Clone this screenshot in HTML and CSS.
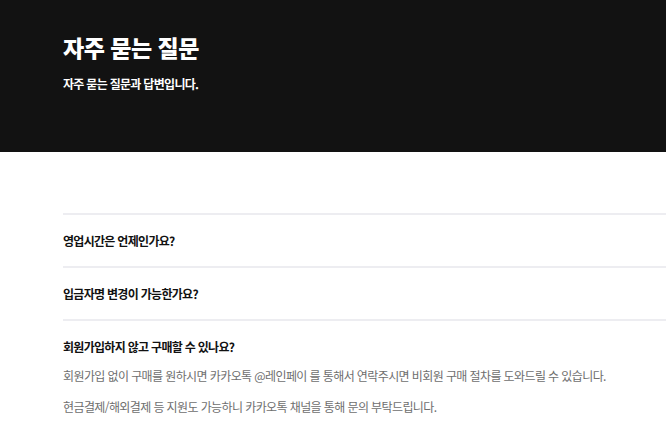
FILE: index.html
```html
<!DOCTYPE html>
<html lang="ko">
<head>
<meta charset="utf-8">
<link rel="stylesheet" href="styles.css">
</head>
<body>
<header class="hero">
  <h1 class="hero-title">자주 묻는 질문</h1>
  <p class="hero-sub">자주 묻는 질문과 답변입니다.</p>
</header>
<section class="faq">
  <div class="item">
    <div class="q">영업시간은 언제인가요?</div>
  </div>
  <div class="item">
    <div class="q">입금자명 변경이 가능한가요?</div>
  </div>
  <div class="item open">
    <div class="q">회원가입하지 않고 구매할 수 있나요?</div>
    <div class="answer">
      <p>회원가입 없이 구매를 원하시면 카카오톡 @레인페이 를 통해서 연락주시면 비회원 구매 절차를 도와드릴 수 있습니다.</p>
      <p>현금결제/해외결제 등 지원도 가능하니 카카오톡 채널을 통해 문의 부탁드립니다.</p>
    </div>
  </div>
</section>
</body>
</html>
```
FILE: styles.css
```css
html, body {
  margin: 0;
  padding: 0;
  background: #ffffff;
  font-family: "Noto Sans CJK KR", "Noto Sans", sans-serif;
  overflow: hidden;
}
.hero {
  background: #121212;
  color: #ffffff;
  height: 152px;
  box-sizing: border-box;
  padding: 32px 0 0 63px;
}
.hero-title {
  margin: 0;
  font-size: 23px;
  line-height: 31px;
  font-weight: 900;
  letter-spacing: -0.5px;
}
.hero-sub {
  margin: 12px 0 0;
  font-size: 12px;
  line-height: 18px;
  font-weight: 700;
  letter-spacing: -0.7px;
}
.faq {
  padding: 61px 0 0 63px;
}
.item {
  border-top: 2px solid #ededf1;
}
.q {
  font-size: 12px;
  line-height: 17px;
  font-weight: 700;
  color: #111111;
  padding: 17px 0;
  letter-spacing: -0.7px;
}
.open .q {
  padding-bottom: 0;
}
.answer {
  padding-top: 12px;
}
.answer p {
  margin: 0 0 14px;
  font-size: 12px;
  line-height: 17px;
  color: #6e6e6e;
  letter-spacing: -0.6px;
  white-space: nowrap;
}
```
